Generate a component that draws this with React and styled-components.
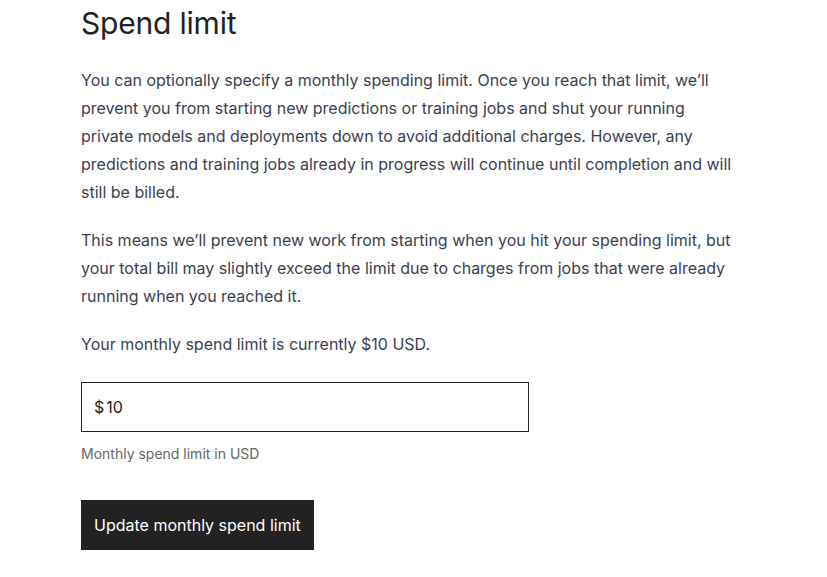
import React, { useState } from 'react';
import styled, { createGlobalStyle } from 'styled-components';

const GlobalStyle = createGlobalStyle`
  body {
    margin: 0;
    background: #fff;
    font-family: 'Inter', 'Liberation Sans', sans-serif;
  }
`;

const Page = styled.div`
  padding: 0 81px;
  max-width: 656px;
`;

const Title = styled.h1`
  margin: 0;
  padding-top: 4px;
  font-size: 30px;
  font-weight: 400;
  line-height: 38px;
  color: #222;
  letter-spacing: -0.2px;
`;

const Text = styled.p`
  margin: ${(p) => p.$top || 20}px 0 0;
  font-size: 16px;
  line-height: 28px;
  color: #3b4150;
`;

const Field = styled.div`
  margin-top: 24px;
  width: 448px;
  height: 50px;
  box-sizing: border-box;
  border: 1px solid #222;
  display: flex;
  align-items: center;
  padding: 0 12px;
  font-size: 16px;
  color: #222;
`;

const Prefix = styled.span`
  margin-right: 2px;
`;

const Input = styled.input`
  border: none;
  outline: none;
  flex: 1;
  font: inherit;
  color: inherit;
  padding: 0;
  background: transparent;
`;

const Help = styled.div`
  margin-top: 12px;
  font-size: 14px;
  line-height: 20px;
  color: #666;
`;

const Button = styled.button`
  margin-top: 36px;
  height: 50px;
  padding: 0 13px;
  border: none;
  background: #222;
  color: #fff;
  font: inherit;
  font-size: 16px;
  cursor: pointer;
`;

const App = () => {
  const [limit, setLimit] = useState('10');
  return (
    <>
      <GlobalStyle />
      <Page>
        <Title>Spend limit</Title>
        <Text $top={24}>
          You can optionally specify a monthly spending limit. Once you reach that limit, we’ll
          prevent you from starting new predictions or training jobs and shut your running
          private models and deployments down to avoid additional charges. However, any
          predictions and training jobs already in progress will continue until completion and will
          still be billed.
        </Text>
        <Text>
          This means we’ll prevent new work from starting when you hit your spending limit, but
          your total bill may slightly exceed the limit due to charges from jobs that were already
          running when you reached it.
        </Text>
        <Text>Your monthly spend limit is currently $10 USD.</Text>
        <Field>
          <Prefix>$</Prefix>
          <Input value={limit} onChange={(e) => setLimit(e.target.value)} />
        </Field>
        <Help>Monthly spend limit in USD</Help>
        <Button>Update monthly spend limit</Button>
      </Page>
    </>
  );
};

export default App;
